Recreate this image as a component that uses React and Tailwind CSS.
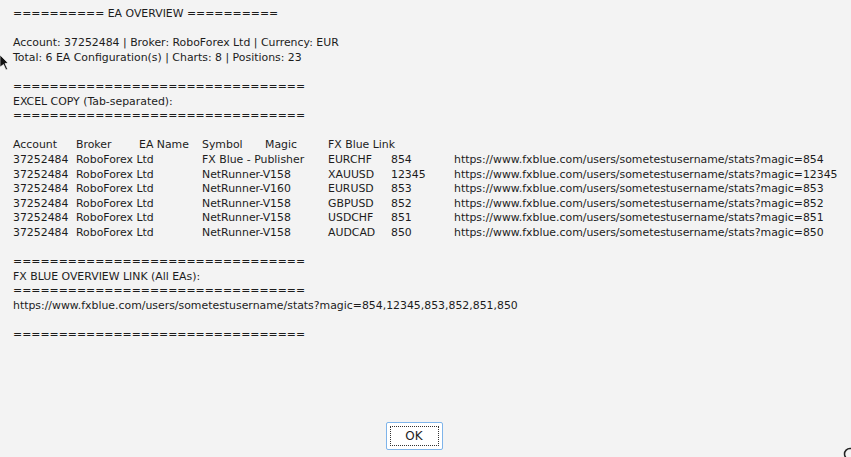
const eq = '================================';

const rows = [
  ['37252484', 'RoboForex Ltd', 'FX Blue - Publisher', 'EURCHF', '854'],
  ['37252484', 'RoboForex Ltd', 'NetRunner-V158', 'XAUUSD', '12345'],
  ['37252484', 'RoboForex Ltd', 'NetRunner-V160', 'EURUSD', '853'],
  ['37252484', 'RoboForex Ltd', 'NetRunner-V158', 'GBPUSD', '852'],
  ['37252484', 'RoboForex Ltd', 'NetRunner-V158', 'USDCHF', '851'],
  ['37252484', 'RoboForex Ltd', 'NetRunner-V158', 'AUDCAD', '850'],
];

const link = (m) => `https://www.fxblue.com/users/sometestusername/stats?magic=${m}`;

const text = [
  '========== EA OVERVIEW ==========',
  '',
  'Account: 37252484 | Broker: RoboForex Ltd | Currency: EUR',
  'Total: 6 EA Configuration(s) | Charts: 8 | Positions: 23',
  '',
  eq,
  'EXCEL COPY (Tab-separated):',
  eq,
  '',
  'Account\tBroker\tEA Name\tSymbol\tMagic\tFX Blue Link',
  ...rows.map((r) => [r[0], r[1], r[2], r[3], r[4], link(r[4])].join('\t')),
  '',
  eq,
  'FX BLUE OVERVIEW LINK (All EAs):',
  eq,
  link('854,12345,853,852,851,850'),
  '',
  eq,
].join('\n');

export default function App() {
  return (
    <div className="relative w-[851px] h-[457px] bg-[#f3f3f3] overflow-hidden flex flex-col font-['DejaVu_Sans',sans-serif] text-[#1c1c1c]">
      <pre className="flex-1 pl-[13px] pt-[7px] m-0 whitespace-pre text-[10.9px] leading-[14.6px] [tab-size:63px] font-['DejaVu_Sans',sans-serif]">
        {text}
      </pre>
      <div className="flex justify-center pb-[7px] pr-[23px]">
        <button className="w-[57px] h-[28px] border border-[#7eb4ea] rounded-[2px] bg-white p-[3px]">
          <span className="flex items-center justify-center w-full h-full border border-dotted border-[#333] text-[12px] text-[#1c1c1c]">
            OK
          </span>
        </button>
      </div>
      {/* mouse cursor */}
      <svg className="absolute left-0 top-[55px]" width="10" height="16" viewBox="0 0 10 16">
        <path d="M0 0 L8 8 L5 8.5 L7.5 14 L6 15 L3.5 9.5 L0 12 Z" fill="#111" stroke="#fff" strokeWidth="0.6" />
      </svg>
      <svg className="absolute left-[843px] top-[447px]" width="14" height="14" viewBox="0 0 14 14">
        <circle cx="7" cy="7" r="5.5" fill="none" stroke="#222" strokeWidth="1.5" />
      </svg>
    </div>
  );
}
